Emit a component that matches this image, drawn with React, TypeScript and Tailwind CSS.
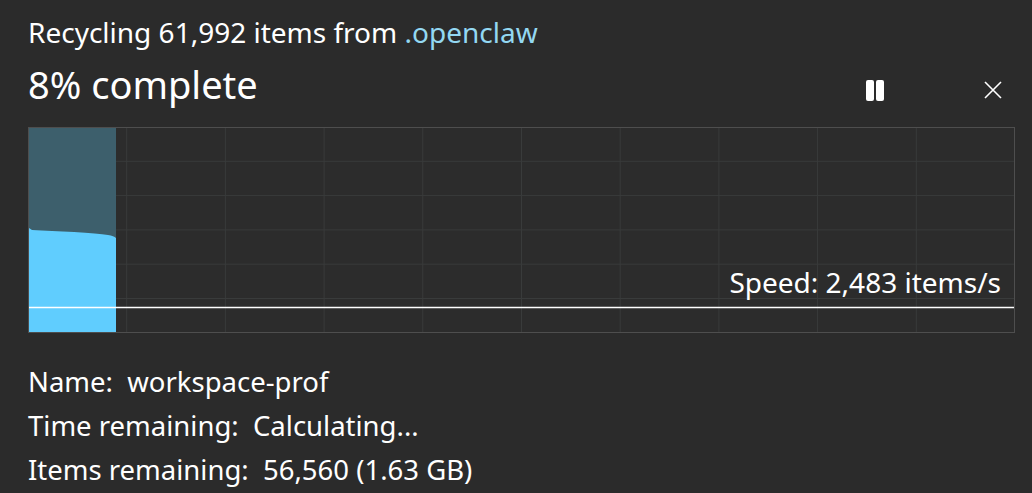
const font = { fontFamily: '"Noto Sans", "Open Sans", sans-serif' }

export default function App() {
  const cols = Array.from({ length: 9 }, (_, i) => (i + 1) * 98.7)
  const rows = Array.from({ length: 5 }, (_, i) => (i + 1) * 34.3)

  return (
    <div className="w-[1032px] h-[493px] bg-[#2b2b2b] text-white overflow-hidden pl-[28px]" style={font}>
      <div className="pt-[13px] text-[28px] leading-[38px]">
        Recycling 61,992 items from <span className="text-[#93d8f2]">.openclaw</span>
      </div>
      <div className="flex items-start h-[52px] mt-[7px] pr-[30px]">
        <div className="text-[38px] leading-[52px] flex-1">8% complete</div>
        <button className="flex gap-[1.5px] mt-[22px] mr-[100px]">
          <span className="w-[8.5px] h-[21px] rounded-[2px] bg-white" />
          <span className="w-[8.5px] h-[21px] rounded-[2px] bg-white" />
        </button>
        <button className="mt-[23px]">
          <svg width="18" height="18" viewBox="0 0 18 18" className="block">
            <path d="M1 1 L17 17 M17 1 L1 17" stroke="white" strokeWidth="1.6" />
          </svg>
        </button>
      </div>
      <div className="relative w-[987px] h-[206px] mt-[17px]">
        <svg width="987" height="206" viewBox="0 0 987 206" className="block">
          <rect x="0" y="0" width="987" height="206" fill="#2c2c2c" />
          {cols.map((x) => (
            <line key={x} x1={x} y1="1" x2={x} y2="205" stroke="#393b3b" strokeWidth="1" />
          ))}
          {rows.map((y) => (
            <line key={y} x1="1" y1={y} x2="986" y2={y} stroke="#393b3b" strokeWidth="1" />
          ))}
          <rect x="1" y="1" width="87" height="204" fill="#3d5f6c" />
          <path d="M1 101 L4 103 Q23 104 46 105 Q70 106.5 80 108 Q86 109 88 111 L88 205 L1 205 Z" fill="#60cdfe" />
          <line x1="1" y1="180.5" x2="986" y2="180.5" stroke="white" strokeWidth="1.5" />
          <rect x="0.5" y="0.5" width="986" height="205" fill="none" stroke="#4e4e4e" strokeWidth="1" />
        </svg>
        <div className="absolute right-[14px] top-[136px] text-[28px] leading-[38px]">
          Speed: 2,483 items/s
        </div>
      </div>
      <div className="mt-[27px] text-[27.5px] leading-[44px]">
        <div>Name:&nbsp; workspace-prof</div>
        <div>Time remaining:&nbsp; Calculating...</div>
        <div>Items remaining:&nbsp; 56,560 (1.63 GB)</div>
      </div>
    </div>
  )
}
